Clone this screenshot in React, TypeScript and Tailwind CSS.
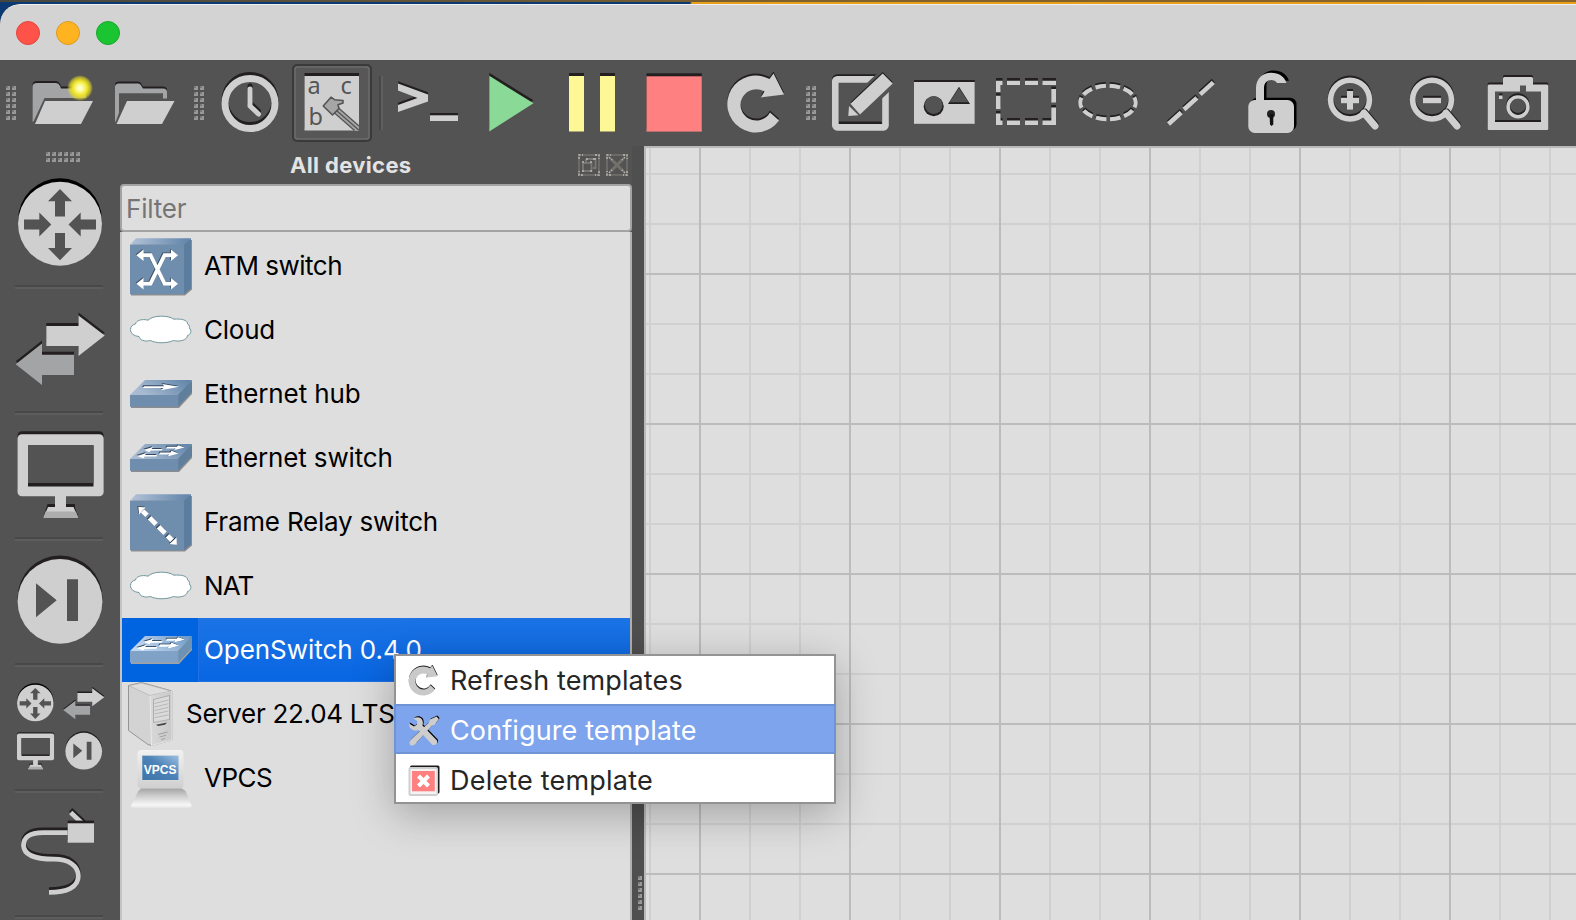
import React from "react";

const INK = "#231f20";
const LIGHT = "#cfcfcf";
const PANEL = "#535353";

type Kids = { children: React.ReactNode };

/* Shape drawn twice: a dark copy nudged away, then the shape itself on top. */
function Raised({
  children,
  dx = 0,
  dy = -3,
  color = LIGHT,
  shade = INK,
}: Kids & { dx?: number; dy?: number; color?: string; shade?: string }) {
  return (
    <>
      <g transform={`translate(${dx} ${dy})`} color={shade} fill={shade}>
        {children}
      </g>
      <g color={color} fill={color}>
        {children}
      </g>
    </>
  );
}

function Grip({ cols, rows }: { cols: number; rows: number }) {
  const dots = [];
  for (let r = 0; r < rows; r++)
    for (let c = 0; c < cols; c++)
      dots.push(
        <g key={`${r}-${c}`} transform={`translate(${c * 6} ${r * 6})`}>
          <rect width="4" height="4" fill="#989898" />
          <rect width="2" height="2" fill="#7a7a7a" />
        </g>
      );
  return (
    <svg width={cols * 6 - 2} height={rows * 6 - 2} className="block shrink-0">
      {dots}
    </svg>
  );
}

function Tool({ x, children }: Kids & { x: number }) {
  return (
    <button className="block h-[86px] w-[82px] shrink-0">
      <svg width="82" height="86" viewBox={`${x} 60 82 86`} className="block">
        {children}
      </svg>
    </button>
  );
}

const RELOAD =
  "M779 120.5A28.5 28.5 0 1 1 769.5 79L773.5 73.5L784 94.5L761 97.5L764.5 91.5A15.7 15.7 0 1 0 770 112.5Z";

function Magnifier({ cx, plus }: { cx: number; plus?: boolean }) {
  return (
    <>
      <Raised dy={-2}>
        <circle cx={cx} cy="99.6" r="19.4" fill="none" stroke="currentColor" strokeWidth="5.6" />
        <rect x={cx - 9} y="97.8" width="18" height="5.4" />
        {plus && <rect x={cx - 3} y="91" width="6" height="18.6" />}
      </Raised>
      <path d={`M${cx + 15} 112L${cx + 25.5} 124.5`} stroke={INK} strokeWidth="6.5" strokeLinecap="round" />
      <path d={`M${cx + 14} 113L${cx + 25} 126`} stroke={LIGHT} strokeWidth="7" strokeLinecap="round" />
    </>
  );
}

function Toolbar() {
  return (
    <div className="flex h-[86px] shrink-0 items-center bg-[#535353] pl-1.5">
      <Grip cols={2} rows={6} />
      <div className="ml-1.5 flex">
        <Tool x={22}>
          <defs>
            <radialGradient id="glow">
              <stop offset="0" stopColor="#fffff0" />
              <stop offset="0.25" stopColor="#fdfb9a" />
              <stop offset="0.55" stopColor="#efe52c" />
              <stop offset="0.8" stopColor="#e8de20" stopOpacity="0.65" />
              <stop offset="1" stopColor="#e8de20" stopOpacity="0" />
            </radialGradient>
          </defs>
          <Raised dy={-2} color="#a3a4a6">
            <path d="M32.5 121.5V87Q32.5 83 37 83H56Q58.500 83 60 86L61 88.500H86V98H44.500L33.500 121.500Z" />
          </Raised>
          <path d="M45 101H93L81 124H35Z" fill={LIGHT} />
          <circle cx="80" cy="88" r="13" fill="url(#glow)" />
        </Tool>
        <Tool x={104}>
          <Raised dy={-2} color="#a3a4a6">
            <path d="M115 121.500V87Q115 83.500 119 83.500H138Q140.500 83.500 142 87L143 88.500H163Q167 88.500 167 92V98.500H163V93.300H119V113L115.500 122Z" />
          </Raised>
          <path d="M127 101H174.500L162 124H116.500Z" fill={LIGHT} />
        </Tool>
      </div>
      <div className="ml-2">
        <Grip cols={2} rows={6} />
      </div>
      <div className="ml-[5px] flex">
        <Tool x={209}>
          <Raised>
            <circle cx="250" cy="103.500" r="25" fill="none" stroke="currentColor" strokeWidth="7" />
            <path d="M250 89V106L258.500 114" fill="none" stroke="currentColor" strokeWidth="5" strokeLinecap="round" strokeLinejoin="round" />
          </Raised>
        </Tool>
        <Tool x={291}>
          <rect x="293" y="65" width="78" height="76" rx="4" fill="#575757" stroke="#3a3a3a" strokeWidth="2" />
          <rect x="295" y="67" width="74" height="72" rx="3" fill="none" stroke="#6a6a6a" strokeWidth="1.600" />
          <Raised>
            <rect x="304.500" y="76" width="54.500" height="54.500" />
          </Raised>
          <g fill="#555" style={{ fontFamily: '"Noto Sans", sans-serif', fontSize: 23.5 }}>
            <text x="307.500" y="93.500">a</text>
            <text x="340.500" y="93.500">c</text>
            <text x="308.500" y="125">b</text>
          </g>
          <path d="M334 112.500L338 107.500L359 126V130.500H354.500Z" fill="#a6a6a6" />
          <path d="M338 107.500L359 126M334 112.500L354.500 130.500M336.500 110.500L359 130.300" fill="none" stroke="#555" strokeWidth="1.300" />
          <path d="M323.200 106L331 97.200L334.500 99.700L343 100.500V103L338 104.800L339 108.500L332.500 115Z" fill="#a6a6a6" stroke="#555" strokeWidth="1.600" strokeLinejoin="round" />
        </Tool>
      </div>
      <div className="ml-[6px] mr-[3px] h-[54px] w-1 border-l-2 border-r-2 border-l-[#484848] border-r-[#5f5f5f]" />
      <div className="flex">
        <Tool x={386}>
          <Raised dy={-2.3}>
            <path d="M398 83.500L428 94.500V101.500L398 112V105L417.500 98L398 90.500Z" />
            <rect x="430" y="115.300" width="28" height="5.700" />
          </Raised>
        </Tool>
        <Tool x={468}>
          <Raised color="#8ad997">
            <path d="M489.300 75.800L533.500 103.300L489.300 131.500Z" />
          </Raised>
        </Tool>
        <Tool x={550}>
          <Raised color="#fdf796">
            <rect x="569" y="76" width="15" height="55.500" />
            <rect x="600" y="76" width="15" height="55.500" />
          </Raised>
        </Tool>
        <Tool x={632}>
          <Raised color="#ff8080">
            <rect x="646.500" y="76.300" width="55.300" height="55.300" />
          </Raised>
        </Tool>
        <Tool x={714}>
          <Raised dy={-2}>
            <path d={RELOAD} />
          </Raised>
        </Tool>
      </div>
      <div className="ml-[10px]">
        <Grip cols={2} rows={6} />
      </div>
      <div className="ml-[5px] flex">
        <Tool x={821}>
          <Raised dy={-1.8}>
            <rect x="835.300" y="79.300" width="50.200" height="48" rx="2" fill="none" stroke="currentColor" strokeWidth="6.700" />
          </Raised>
          <path d="M839 121.500H881V124H839Z" fill={INK} />
          <path d="M848.500 116L849.500 104.500L882.700 73L892.700 83.500L859.500 115Z" fill={PANEL} stroke={PANEL} strokeWidth="7" />
          <Raised dy={-1.500}>
            <path d="M850.500 103.700L882.700 73.500L892.700 83.500L860 114.500Z" />
          </Raised>
          <path d="M849 106L858.500 115.300L848.300 116Z" fill={LIGHT} />
        </Tool>
        <Tool x={903}>
          <Raised dy={-2}>
            <rect x="914" y="82" width="60.700" height="41.800" />
          </Raised>
          <circle cx="933.700" cy="106.200" r="10" fill={INK} />
          <path d="M959 86.700L970 104H948Z" fill={INK} />
          <circle cx="933.700" cy="105" r="8.900" fill={PANEL} />
          <path d="M959 88L968.500 102.300H949.500Z" fill={PANEL} />
        </Tool>
        <Tool x={985}>
          <Raised dy={-2.600}>
            <path d="M996 80.700H1002.500V85H1000.500V92H996ZM1007 80.700H1020V85H1007ZM1025 80.700H1038V85H1025ZM1042.500 80.700H1056V85H1042.500ZM996 95.800H1000.500V109H996ZM996 113.500H1000.500V120.500H1002.500V125H996ZM1007 120.500H1020V125H1007ZM1025 120.500H1038V125H1025ZM1042.500 120.500H1051.300V107.500H1056V125H1042.500ZM1051.300 89H1056V102.500H1051.300Z" />
          </Raised>
        </Tool>
        <Tool x={1067}>
          <Raised dy={-1.800}>
            <ellipse cx="1108" cy="102.500" rx="27.700" ry="16.800" fill="none" stroke="currentColor" strokeWidth="4" strokeDasharray="10.500 3.700" strokeDashoffset="5.500" pathLength={142} />
          </Raised>
        </Tool>
        <Tool x={1149}>
          <Raised dy={-1.800}>
            <path d="M1168.500 124L1181.200 112.500M1184 109.500L1196.900 97.900M1200.200 94.300L1213.300 82.300" stroke="currentColor" strokeWidth="4.500" />
          </Raised>
        </Tool>
        <Tool x={1231}>
          <Raised dx={2.500} dy={-2.300} shade="#000">
            <rect x="1248.300" y="100" width="45.700" height="33" rx="6.500" />
            <path d="M1256 103V88C1256 78.500 1263 72.700 1271 72.700C1279 72.700 1284.500 76.500 1286.500 83H1277C1275.500 80.800 1273.500 80 1271.500 80C1267 80 1264 83 1264 88V103Z" />
          </Raised>
          <circle cx="1271" cy="114" r="4" fill="#222" />
          <path d="M1269.500 114H1273.300V124.500L1271.500 126L1270 124.500Z" fill="#111" />
        </Tool>
        <Tool x={1313}>
          <Magnifier cx={1350} plus />
        </Tool>
        <Tool x={1395}>
          <Magnifier cx={1432} />
        </Tool>
        <Tool x={1477}>
          <Raised dy={-2}>
            <path fillRule="evenodd" d="M1489 84.500H1503V78.500Q1503 77 1504.500 77H1531.500Q1533 77 1533 78.500V84.500H1547Q1548.300 84.500 1548.300 86V128.500Q1548.300 130 1547 130H1489Q1487.700 130 1487.700 128.500V86Q1487.700 84.500 1489 84.500ZM1495 91.500V122H1541V91.500H1526V85.500H1520V91.500Z" />
            <circle cx="1518" cy="106.800" r="9.900" fill="none" stroke="currentColor" strokeWidth="3.400" />
            <rect x="1499" y="95.500" width="3.500" height="3.500" />
          </Raised>
        </Tool>
      </div>
    </div>
  );
}

function RouterGlyph() {
  return (
    <>
      <Raised dy={-3.5} shade="#000">
        <circle cx="60" cy="223.700" r="42" />
      </Raised>
      <path
        fill={PANEL}
        d="M60 189L72 201.300H65V216.500H55V201.300H48ZM60 260.300L48 248H55V233H65V248H72ZM51.300 224.600L39.300 236.600V229.600H24V219.600H39.300V212.600ZM68.500 224.600L80.700 212.600V219.600H96V229.600H80.700V236.600Z"
      />
    </>
  );
}

function ArrowsGlyph() {
  return (
    <>
      <Raised>
        <path d="M46.300 326H78.500V315.500L104.700 335.500L78.500 356V346H46.300Z" />
      </Raised>
      <Raised color="#a3a4a6">
        <path d="M74 354.700H42V343.500L15.700 364.300L42 385V375H74Z" />
      </Raised>
    </>
  );
}

function MonitorGlyph() {
  return (
    <>
      <path d="M47.500 504H75V508L78 515H44Z" fill={INK} />
      <Raised>
        <rect x="17.500" y="434.300" width="86.200" height="62" rx="4.500" />
      </Raised>
      <rect x="28" y="445.300" width="65.500" height="41.200" fill={INK} />
      <rect x="28" y="445.300" width="65.500" height="37.700" fill={PANEL} />
      <path d="M55 496H66V507H73.500L78 517.700H43.500L48 507H55Z" fill={LIGHT} />
      <path d="M45.500 511.500H76L78 517.700H43.500Z" fill="#adadad" />
    </>
  );
}

function EndDeviceGlyph() {
  return (
    <>
      <Raised dy={-3.500}>
        <circle cx="60" cy="601.300" r="42.400" />
      </Raised>
      <path d="M36 583.300L56.700 600.300L36 617.300ZM67 579.300H78V621H67Z" fill={PANEL} />
    </>
  );
}

function Category({ y, children }: Kids & { y: number }) {
  return (
    <div className="shrink-0">
      <svg width="118" height="122" viewBox={`0 ${y} 118 122`} className="block">
        {children}
      </svg>
      <div className="ml-[15px] h-1 w-[88px] border-b-2 border-t-2 border-b-[#5d5d5d] border-t-[#484848]" />
    </div>
  );
}

function DeviceBar() {
  return (
    <div className="flex w-[120px] shrink-0 flex-col overflow-hidden bg-[#535353] pt-1.5">
      <div className="mb-px pl-[46px]">
        <Grip cols={6} rows={2} />
      </div>
      <Category y={163}>
        <RouterGlyph />
      </Category>
      <Category y={289}>
        <ArrowsGlyph />
      </Category>
      <Category y={415}>
        <MonitorGlyph />
      </Category>
      <Category y={541}>
        <EndDeviceGlyph />
      </Category>
      <Category y={667}>
        <g transform="translate(35.300 703) scale(.435) translate(-60 -223.700)">
          <RouterGlyph />
        </g>
        <g transform="translate(63.300 688.300) scale(.46 .447) translate(-15.700 -315.700)">
          <ArrowsGlyph />
        </g>
        <g transform="translate(17 733.500) scale(.43) translate(-17.500 -434.300)">
          <MonitorGlyph />
        </g>
        <g transform="translate(83.700 751.200) scale(.433) translate(-60 -601.300)">
          <EndDeviceGlyph />
        </g>
      </Category>
      <Category y={793}>
        <Raised dy={-2.700}>
          <path d="M70.700 812.500L84 825" stroke="currentColor" strokeWidth="4.600" />
          <path d="M69 832.700H43C29 832.700 23.500 838 23.500 845.500C24 855 34 859.200 54 859.200C69 859.200 78.300 866 78.300 876C78.300 887 67 892.300 49 892.300" fill="none" stroke="currentColor" strokeWidth="4.800" />
        </Raised>
        <Raised dy={-2.700}>
          <rect x="67.700" y="823.300" width="26.300" height="19.400" />
        </Raised>
      </Category>
    </div>
  );
}

function IconDefs() {
  return (
    <svg width="0" height="0" className="absolute">
      <defs>
        <linearGradient id="faceTop" x1="0" x2="1">
          <stop offset="0" stopColor="#b3c3d8" />
          <stop offset="1" stopColor="#5f83a8" />
        </linearGradient>
        <linearGradient id="faceLid" x1="0" x2="1" y1="0.600" y2="0.300">
          <stop offset="0.100" stopColor="#a9bbd1" />
          <stop offset="1" stopColor="#6387ab" />
        </linearGradient>
        <linearGradient id="tower" x1="0" x2="1">
          <stop offset="0" stopColor="#d8d8d8" />
          <stop offset="1" stopColor="#c9c9c9" />
        </linearGradient>
        <linearGradient id="keys" x1="0" x2="0" y1="0" y2="1">
          <stop offset="0" stopColor="#a5a5a5" />
          <stop offset="0.450" stopColor="#d4d4d4" />
          <stop offset="0.850" stopColor="#f7f7f7" />
          <stop offset="1" stopColor="#e4e4e4" />
        </linearGradient>
        <linearGradient id="bezel" x1="0" x2="0" y1="0" y2="1">
          <stop offset="0" stopColor="#f2f2f2" />
          <stop offset="1" stopColor="#cfcfcf" />
        </linearGradient>
        <linearGradient id="screen" x1="0" x2="1" y1="1" y2="0">
          <stop offset="0" stopColor="#3f74a8" />
          <stop offset="0.550" stopColor="#4d83b8" />
          <stop offset="1" stopColor="#9cc0e0" />
        </linearGradient>
      </defs>
    </svg>
  );
}

function Cube({ children }: Kids) {
  return (
    <>
      <path d="M9 12L15 6L70 6V55.500L63 61.500H9Z" fill="#8d8d8d" />
      <path d="M8 10.700L14 4.300H69L62 10.700Z" fill="url(#faceTop)" />
      <path d="M62 10.700L69 4.300V54.500L62 60.300Z" fill="#5d7d9e" />
      <rect x="8" y="10.700" width="54" height="49.500" fill="#6f8dad" />
      {children}
    </>
  );
}

function Slab({ children }: Kids) {
  return (
    <>
      <path d="M9 34V46H57L70 32V20Z" fill="#8d8d8d" />
      <path d="M23 18H70L56 33H8Z" fill="url(#faceLid)" />
      <path d="M70 18V30L56 44.700V33Z" fill="#5f7f9c" />
      <rect x="8" y="33" width="48.200" height="11.700" fill="#6f8dad" />
      {children}
    </>
  );
}

function AtmIcon() {
  return (
    <Cube>
      <Raised dx={-0.800} dy={-0.800} color="#fff" shade="#3c4f63">
        <path d="M20 21.200H28.500L42.500 49.700H50M50 21.200H42.500L28.500 49.700H20" fill="none" stroke="currentColor" strokeWidth="3.800" />
        <path d="M14.300 21.200L21.500 15.500V27ZM56 21.200L49 15.500V27ZM14.300 49.700L21.500 44V55.500ZM56 49.700L49 44V55.500Z" />
      </Raised>
    </Cube>
  );
}

function CloudIcon() {
  return (
    <path
      d="M17 38.500C12 38 8.500 35.500 8.500 31.500C8.500 28 11 26.500 13.500 26C14 22.500 20 20.500 26 22.200C31 17 46 17 52 21.200C59 20.500 66 22 65.500 26C68 27 67.500 29.500 67.300 30C70 32.500 69 36.500 65.500 37.500C65 42.500 57 44 51.500 42.500C45 45.500 34 45.500 28.500 42.500C23 44 17.500 42 17 38.500Z"
      fill="#fff"
      stroke="#6f979c"
      strokeWidth="1"
    />
  );
}

function HubIcon() {
  return (
    <Slab>
      <Raised dx={-0.800} dy={-1} color="#fff" shade="#33475c">
        <path d="M22 24.300H42L40.500 22L57 24.800L39 28.200L41.500 26H21Z" />
      </Raised>
    </Slab>
  );
}

function SwitchIcon() {
  return (
    <Slab>
      <Raised dx={-0.700} dy={-0.900} color="#fff" shade="#33475c">
        <path d="M45 20.700H55L56 19.300L62.500 21.600L52.500 24L53.500 22.500H44ZM40.500 22.900H29.500L31 21L22 23.700L27.500 26.200L28.500 24.600H39.500ZM38 26.500H48.500L49.500 24.800L56.500 27.500L46 30.200L47 28.400H37ZM35 28.900H23L24.500 27L15 29.900L21.500 32.200L22.500 30.600H34.500Z" />
      </Raised>
    </Slab>
  );
}

function FrameRelayIcon() {
  return (
    <Cube>
      <Raised dx={-0.800} dy={-0.800} color="#fff" shade="#2d3a48">
        <path d="M20.500 21L25 25.300M27.500 27.800L34 34.200M36.500 36.800L43 43.200M45.500 45.800L50 50.300" stroke="currentColor" strokeWidth="5" />
        <path d="M16.300 16.800L23.500 17.500L17 24.500ZM54.800 54.800L54.500 47.500L47.500 54Z" />
      </Raised>
    </Cube>
  );
}

function ServerIcon() {
  return (
    <>
      <path d="M6.500 3.500L19.500 0.500L50 9V58L29.500 63.500L26 62.500L6.500 48.500Z" fill="#d3d3d3" stroke="#8d8d8d" strokeWidth="0.900" strokeLinejoin="round" />
      <path d="M28 13.500L50 9V58L29.500 63.500Z" fill="url(#tower)" stroke="#efefef" strokeWidth="0.800" />
      <path d="M7 3.700L19.500 1L49 9L28 13.500Z" fill="#dedede" stroke="#aaa" strokeWidth="0.600" />
      <path d="M31.500 17.500L47.500 13.500V37.500L31.500 40.500Z" fill="#dadada" stroke="#9c9c9c" strokeWidth="0.700" />
      <path d="M32.500 21.500L46.500 18M32.500 25L46.500 21.700M32.500 28.500L46.500 25.300M32.500 32L46.500 29M32.500 35.700L46.500 32.800" stroke="#adadad" strokeWidth="0.800" />
      <path d="M34 42.800L45 40.500L43 42.800L36 44Z" fill="#444" />
      <path d="M36 52.500L45.500 50M37.500 55L44 53.300M39 57.500L43 56.500" stroke="#a0a0a0" strokeWidth="1" />
    </>
  );
}

function VpcsIcon() {
  return (
    <>
      <rect x="15.500" y="4" width="46" height="38.500" rx="4" fill="url(#bezel)" />
      <rect x="19.700" y="9" width="37.300" height="25.300" fill="#e2e2e2" />
      <rect x="20.300" y="9.700" width="36.200" height="24.300" fill="url(#screen)" />
      <path d="M19 42.500H60L63.500 45L69.500 59Q70 62 67 62H11Q8.500 62 9.300 59L16.300 45Z" fill="url(#keys)" />
      <text x="38.200" y="28" textAnchor="middle" fill="#fff" className="font-bold" style={{ fontFamily: '"Liberation Sans", sans-serif', fontSize: 12 }}>
        VPCS
      </text>
    </>
  );
}

type Device = { name: string; icon: () => React.ReactElement; tracking: string; selected?: boolean; narrow?: boolean };

const devices: Device[] = [
  { name: "ATM switch", icon: AtmIcon, tracking: "tracking-[-0.5px]" },
  { name: "Cloud", icon: CloudIcon, tracking: "tracking-[-0.25px]" },
  { name: "Ethernet hub", icon: HubIcon, tracking: "tracking-[-0.1px]" },
  { name: "Ethernet switch", icon: SwitchIcon, tracking: "tracking-[-0.15px]" },
  { name: "Frame Relay switch", icon: FrameRelayIcon, tracking: "tracking-[-0.22px]" },
  { name: "NAT", icon: CloudIcon, tracking: "tracking-[-0.9px]" },
  { name: "OpenSwitch 0.4.0", icon: SwitchIcon, tracking: "tracking-[-0.05px]", selected: true },
  { name: "Server 22.04 LTS", icon: ServerIcon, tracking: "tracking-[-0.28px]", narrow: true },
  { name: "VPCS", icon: VpcsIcon, tracking: "tracking-[-0.5px]" },
];

function DeviceRow({ name, icon: Icon, tracking, selected, narrow }: Device) {
  return (
    <div className={`flex h-16 shrink-0 ${selected ? "bg-[#0064e1] text-white" : "text-black"}`}>
      <svg width={narrow ? 58 : 76} height="64" className={`block shrink-0 ${selected ? "brightness-115" : ""}`}>
        <Icon />
      </svg>
      <div
        className={`flex flex-1 items-center whitespace-nowrap text-[26px] leading-8 ${tracking} ${
          selected
            ? "border-b border-l border-t border-[#2272e4] bg-linear-to-b from-[#1a74e6] to-[#0866e3] pl-[5px]"
            : "pl-1.5"
        }`}
      >
        {name}
      </div>
    </div>
  );
}

function DockButton({ close }: { close?: boolean }) {
  return (
    <svg width="22" height="22" className="block">
      <rect x="1" y="1" width="20" height="20" fill="none" stroke="#75736e" strokeWidth="1.500" />
      <path d="M1 5V1H5M17 1H21V5M21 17V21H17M5 21H1V17" fill="none" stroke="#a9a5a0" strokeWidth="1.800" strokeDasharray="2 1.500" />
      {close ? (
        <>
          <path d="M5 5L17 17M17 5L5 17" stroke="#73716c" strokeWidth="3" />
          <path d="M3 3L6 6M19 3L16 6M3 19L6 16M19 19L16 16" stroke="#b5b1ac" strokeWidth="1.500" strokeDasharray="2 1" />
        </>
      ) : (
        <>
          <path d="M8 5H17.500V14H15M8 5V8" fill="none" stroke="#7b7974" strokeWidth="1.800" />
          <rect x="5" y="9" width="8.500" height="8" fill="none" stroke="#7b7974" strokeWidth="1.800" />
          <path d="M4 8H6M12 8H14M4 17H6M12 17H14M8 5H10M15 5H18" stroke="#bcb8b2" strokeWidth="1.600" />
        </>
      )}
    </svg>
  );
}

function DevicesDock() {
  return (
    <div className="flex w-[512px] shrink-0 flex-col bg-[#535353]">
      <div className="flex h-[38px] shrink-0 items-center pr-1">
        <div className="flex-1 pl-[170px] text-[22px] font-bold leading-7 tracking-[0.35px] text-[#e3e3e3]">All devices</div>
        <div className="flex gap-1.5">
          <DockButton />
          <DockButton close />
        </div>
      </div>
      <div className="flex h-12 shrink-0 items-center rounded border-2 border-[#a3a3a3] bg-[#dedede] pl-1 text-[26px] tracking-[-0.2px] text-[#757575]">
        Filter
      </div>
      <div className="flex min-h-0 flex-1 flex-col border-l-2 border-r-2 border-l-[#c4c4c4] border-r-[#b0b0b0] bg-[#dedede] pt-0.5">
        {devices.map((d) => (
          <DeviceRow key={d.name} {...d} />
        ))}
      </div>
    </div>
  );
}

function Workspace() {
  return (
    <div className="min-w-0 flex-1 border-l-2 border-t-2 border-l-[#b9b9b9] border-t-[#b9b9b9] bg-[#dedede]">
      <svg width="930" height="772" viewBox="646 148 930 772" className="block">
        <defs>
          <pattern id="minor" x="649" y="173" width="50" height="50" patternUnits="userSpaceOnUse">
            <path d="M0 0H50V2H2V50H0Z" fill="#d0d0d0" />
          </pattern>
          <pattern id="major" x="699" y="273" width="150" height="150" patternUnits="userSpaceOnUse">
            <path d="M0 0H150V2H2V150H0Z" fill="#bcbcbc" />
          </pattern>
        </defs>
        <rect x="646" y="148" width="930" height="772" fill="url(#minor)" />
        <rect x="646" y="148" width="930" height="772" fill="url(#major)" />
      </svg>
    </div>
  );
}

function ContextMenu() {
  return (
    <div className="absolute left-[394px] top-[654px] flex h-[150px] w-[442px] flex-col border-2 border-[#939393] bg-white text-[27px] text-[#262626] shadow-[0_10px_40px_rgba(0,0,0,0.27)]">
      <div className="flex h-12 items-center whitespace-nowrap pl-3 pt-0.5">
        <svg width="32" height="32" viewBox="0 0 32 32" className="mr-2.5 shrink-0">
          <g transform="translate(15 16) scale(.51) translate(-755.500 -104)">
            <Raised dx={0.500} dy={-2} color="#c9c9c9">
              <path d={RELOAD} />
            </Raised>
          </g>
        </svg>
        <span className="tracking-[0.12px]">Refresh templates</span>
      </div>
      <div className="-mx-[2px] flex h-[50px] items-center whitespace-nowrap border-2 border-[#7094d3] bg-[#7da4ec] pl-3 pt-1 text-white">
        <svg width="32" height="32" viewBox="0 0 32 32" className="mr-2.5 shrink-0">
          <Raised dx={0.800} dy={-1} color="#cdcdcd" shade="#000">
            <path d="M5.500 3.500C11 0 16.500 4 14.500 10.500L29 25.500Q30 29 26.500 30H24.500L10.500 15C6 17 1 14 1 8.500L6 11.500L9 9.500L9.200 6Z" />
            <path d="M28.500 1.500L30.800 4L27 9.500L24 10.500L9.500 26.500Q7 31 3 30.500Q0 28.500 3 24.500L20.500 8L22 4.500Z" />
          </Raised>
        </svg>
        <span className="tracking-[0.12px]">Configure template</span>
      </div>
      <div className="flex h-12 items-center whitespace-nowrap pl-3 pt-1.5">
        <svg width="32" height="32" viewBox="0 0 32 32" className="mr-2.5 shrink-0">
          <rect x="2" y="0.500" width="29.500" height="28" rx="1.500" fill="#1c1c1c" />
          <rect x="0.500" y="2" width="29.500" height="29" rx="2" fill="#cfcfcf" />
          <rect x="2.500" y="4" width="26" height="25" fill="#f6f2f2" />
          <rect x="4" y="6" width="22.800" height="20.300" fill="#ff8080" />
          <path d="M10.500 11L20.500 21M20.500 11L10.500 21" stroke="#fff" strokeWidth="4.200" />
        </svg>
        <span className="tracking-[0.2px]">Delete template</span>
      </div>
    </div>
  );
}

export default function App() {
  return (
    <div className="relative flex h-[920px] w-[1576px] flex-col overflow-hidden bg-linear-to-r from-[#0b3a73] from-[690px] to-[#e8a01c] to-[692px] font-['Inter','Liberation_Sans',sans-serif]">
      <IconDefs />
      <div className="h-0.5 shrink-0 bg-linear-to-r from-[#45463f] via-[#7d602c] to-[#8a6428]" />
      <div className="h-0.5 shrink-0" />
      <div className="flex min-h-0 flex-1 flex-col overflow-hidden rounded-tl-[20px] bg-[#535353]">
        <div className="flex h-14 shrink-0 items-center gap-4 rounded-tl-[20px] border-t border-[#f0f0f0] bg-[#d3d3d3] pl-4">
          <div className="size-6 rounded-full border border-[#e2453d] bg-[#ff5249]" />
          <div className="size-6 rounded-full border border-[#dc9a22] bg-[#ffb320]" />
          <div className="size-6 rounded-full border border-[#19a82a] bg-[#1bc431]" />
        </div>
        <Toolbar />
        <div className="flex min-h-0 flex-1">
          <DeviceBar />
          <DevicesDock />
          <div className="flex w-3 shrink-0 flex-col items-end justify-end bg-[#4f4f4f] pb-[10px] pr-[2px]">
            <Grip cols={1} rows={6} />
          </div>
          <Workspace />
        </div>
      </div>
      <ContextMenu />
    </div>
  );
}
